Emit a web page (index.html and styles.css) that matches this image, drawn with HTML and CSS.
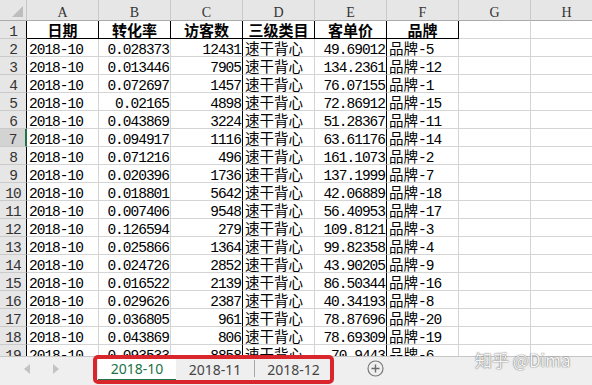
FILE: index.html
```html
<!DOCTYPE html>
<html lang="zh">
<head>
<meta charset="utf-8">
<title>Sheet</title>
<link rel="stylesheet" href="styles.css">
</head>
<body>
<div class="grid">
  <div class="corner"><svg width="11" height="11" viewBox="0 0 11 11"><polygon points="11,0 11,11 0,11" fill="#bdbdbd"/></svg></div>
  <div class="h">A</div><div class="h">B</div><div class="h">C</div><div class="h">D</div><div class="h">E</div><div class="h">F</div><div class="h">G</div><div class="h">H</div>

  <div class="r">1</div><div class="c t">日期</div><div class="c t">转化率</div><div class="c t">访客数</div><div class="c t">三级类目</div><div class="c t">客单价</div><div class="c t">品牌</div><div class="c"></div><div class="c"></div>

  <div class="r">2</div><div class="c">2018-10</div><div class="c n">0.028373</div><div class="c n k">12431</div><div class="c d">速干背心</div><div class="c n k">49.69012</div><div class="c"><span class="zh">品牌</span>-5</div><div class="c"></div><div class="c"></div>
  <div class="r">3</div><div class="c">2018-10</div><div class="c n">0.013446</div><div class="c n k">7905</div><div class="c d">速干背心</div><div class="c n k">134.2361</div><div class="c"><span class="zh">品牌</span>-12</div><div class="c"></div><div class="c"></div>
  <div class="r">4</div><div class="c">2018-10</div><div class="c n">0.072697</div><div class="c n k">1457</div><div class="c d">速干背心</div><div class="c n k">76.07155</div><div class="c"><span class="zh">品牌</span>-1</div><div class="c"></div><div class="c"></div>
  <div class="r">5</div><div class="c">2018-10</div><div class="c n">0.02165</div><div class="c n k">4898</div><div class="c d">速干背心</div><div class="c n k">72.86912</div><div class="c"><span class="zh">品牌</span>-15</div><div class="c"></div><div class="c"></div>
  <div class="r">6</div><div class="c">2018-10</div><div class="c n">0.043869</div><div class="c n k">3224</div><div class="c d">速干背心</div><div class="c n k">51.28367</div><div class="c"><span class="zh">品牌</span>-11</div><div class="c"></div><div class="c"></div>
  <div class="r sel">7</div><div class="c">2018-10</div><div class="c n">0.094917</div><div class="c n k">1116</div><div class="c d">速干背心</div><div class="c n k">63.61176</div><div class="c"><span class="zh">品牌</span>-14</div><div class="c"></div><div class="c"></div>
  <div class="r">8</div><div class="c">2018-10</div><div class="c n">0.071216</div><div class="c n k">496</div><div class="c d">速干背心</div><div class="c n k">161.1073</div><div class="c"><span class="zh">品牌</span>-2</div><div class="c"></div><div class="c"></div>
  <div class="r">9</div><div class="c">2018-10</div><div class="c n">0.020396</div><div class="c n k">1736</div><div class="c d">速干背心</div><div class="c n k">137.1999</div><div class="c"><span class="zh">品牌</span>-7</div><div class="c"></div><div class="c"></div>
  <div class="r">10</div><div class="c">2018-10</div><div class="c n">0.018801</div><div class="c n k">5642</div><div class="c d">速干背心</div><div class="c n k">42.06889</div><div class="c"><span class="zh">品牌</span>-18</div><div class="c"></div><div class="c"></div>
  <div class="r">11</div><div class="c">2018-10</div><div class="c n">0.007406</div><div class="c n k">9548</div><div class="c d">速干背心</div><div class="c n k">56.40953</div><div class="c"><span class="zh">品牌</span>-17</div><div class="c"></div><div class="c"></div>
  <div class="r">12</div><div class="c">2018-10</div><div class="c n">0.126594</div><div class="c n k">279</div><div class="c d">速干背心</div><div class="c n k">109.8121</div><div class="c"><span class="zh">品牌</span>-3</div><div class="c"></div><div class="c"></div>
  <div class="r">13</div><div class="c">2018-10</div><div class="c n">0.025866</div><div class="c n k">1364</div><div class="c d">速干背心</div><div class="c n k">99.82358</div><div class="c"><span class="zh">品牌</span>-4</div><div class="c"></div><div class="c"></div>
  <div class="r">14</div><div class="c">2018-10</div><div class="c n">0.024726</div><div class="c n k">2852</div><div class="c d">速干背心</div><div class="c n k">43.90205</div><div class="c"><span class="zh">品牌</span>-9</div><div class="c"></div><div class="c"></div>
  <div class="r">15</div><div class="c">2018-10</div><div class="c n">0.016522</div><div class="c n k">2139</div><div class="c d">速干背心</div><div class="c n k">86.50344</div><div class="c"><span class="zh">品牌</span>-16</div><div class="c"></div><div class="c"></div>
  <div class="r">16</div><div class="c">2018-10</div><div class="c n">0.029626</div><div class="c n k">2387</div><div class="c d">速干背心</div><div class="c n k">40.34193</div><div class="c"><span class="zh">品牌</span>-8</div><div class="c"></div><div class="c"></div>
  <div class="r">17</div><div class="c">2018-10</div><div class="c n">0.036805</div><div class="c n k">961</div><div class="c d">速干背心</div><div class="c n k">78.87696</div><div class="c"><span class="zh">品牌</span>-20</div><div class="c"></div><div class="c"></div>
  <div class="r">18</div><div class="c">2018-10</div><div class="c n">0.043869</div><div class="c n k">806</div><div class="c d">速干背心</div><div class="c n k">78.69309</div><div class="c"><span class="zh">品牌</span>-19</div><div class="c"></div><div class="c"></div>
  <div class="r">19</div><div class="c">2018-10</div><div class="c n">0.093533</div><div class="c n k">8858</div><div class="c d">速干背心</div><div class="c n k">70.9443</div><div class="c"><span class="zh">品牌</span>-6</div><div class="c"></div><div class="c"></div>
</div>

<div class="tabbar">
  <div class="nav">
    <svg width="7" height="10" viewBox="0 0 7 10"><polygon points="6,0 6,10 0,5" fill="#c3c3c3"/></svg>
    <svg width="7" height="10" viewBox="0 0 7 10"><polygon points="1,0 1,10 7,5" fill="#c3c3c3"/></svg>
  </div>
  <div class="tab on">2018-10</div>
  <div class="tab">2018-11</div>
  <div class="sep"></div>
  <div class="tab last">2018-12</div>
  <div class="add"><svg width="17" height="17" viewBox="0 0 17 17"><circle cx="8.5" cy="8.5" r="7.5" fill="none" stroke="#7a7a7a" stroke-width="1.2"/><path d="M8.5 4.5v8M4.5 8.5h8" stroke="#6a6a6a" stroke-width="1.4"/></svg></div>
</div>

<div class="mark"></div>
<div class="wm">知乎 @Dima</div>
</body>
</html>
```

FILE: styles.css
```css
* { box-sizing: border-box; }
html, body { margin: 0; padding: 0; }
body {
  width: 592px;
  height: 385px;
  overflow: hidden;
  background: #fff;
  position: relative;
}

.grid {
  display: grid;
  grid-template-columns: 27px repeat(8, 72px);
  grid-template-rows: 21px;
  grid-auto-rows: 18px;
  width: 592px;
  height: 356px;
  overflow: hidden;
}
.grid > div {
  border-right: 1px solid #d4d4d4;
  border-bottom: 1px solid #d4d4d4;
  white-space: nowrap;
  overflow: hidden;
}

.corner {
  background: #e6e6e6;
  display: flex;
  align-items: flex-end;
  justify-content: flex-end;
  padding: 0 3px 3px 0;
  border-right-color: #c6c6c6 !important;
  border-bottom-color: #ababab !important;
}
.corner svg { display: block; }

.h {
  background: #e6e6e6;
  text-align: center;
  font: 14px/25px "Liberation Serif", serif;
  color: #333;
  border-right-color: #cacaca !important;
  border-bottom-color: #ababab !important;
}

.r {
  background: #e6e6e6;
  text-align: center;
  font: 14.5px/22px "Liberation Mono", monospace;
  letter-spacing: -1px;
  color: #333;
  border-right-color: #000 !important;
  border-bottom-color: #cacaca !important;
}
.r.sel {
  background: #d3d3d3;
  border-right: 2px solid #217346 !important;
}

.c {
  font: 14.5px/22px "Liberation Mono", "Noto Sans CJK SC", monospace;
  letter-spacing: -1px;
  color: #000;
  padding: 0 2px;
}
.n { text-align: right; padding-right: 1px; }
.k { border-right-color: #000 !important; }
.d, .zh {
  letter-spacing: 0;
  font-family: "Noto Sans CJK SC", sans-serif;
  line-height: 17px;
}

.t {
  font-family: "Noto Sans CJK SC", sans-serif;
  font-weight: bold;
  font-size: 15px;
  line-height: 17px;
  letter-spacing: 0;
  text-align: center;
  border-right-color: #000 !important;
  border-bottom-color: #000 !important;
}

.tabbar {
  height: 29px;
  background: #efefef;
  border-top: 1px solid #c6c6c6;
  display: flex;
  align-items: flex-start;
}
.nav {
  width: 98px;
  display: flex;
  gap: 21px;
  padding: 7px 0 0 24px;
}
.nav svg { display: block; }
.tab {
  width: 78px;
  height: 24px;
  display: flex;
  align-items: center;
  justify-content: center;
  font: 14px "Noto Sans", sans-serif;
  color: #444;
}
.tab.on {
  background: #fff;
  color: #217346;
  border-bottom: 2px solid #217346;
}
.tab.last { width: 77px; }
.sep {
  width: 1px;
  height: 17px;
  margin-top: 3px;
  background: #a8a8a8;
}
.add {
  margin: 3px 0 0 35px;
}
.add svg { display: block; }

.mark {
  position: absolute;
  left: 93px;
  top: 355px;
  width: 241px;
  height: 29px;
  border: 4px solid #d8262c;
  border-radius: 5px;
}
.wm {
  position: absolute;
  left: 475px;
  top: 347px;
  font: 17px "Noto Sans CJK SC", sans-serif;
  color: #f6f6f6;
  text-shadow: 0 0 1px rgba(0,0,0,0.55), 0 0 2px rgba(0,0,0,0.35);
  white-space: nowrap;
}
```
